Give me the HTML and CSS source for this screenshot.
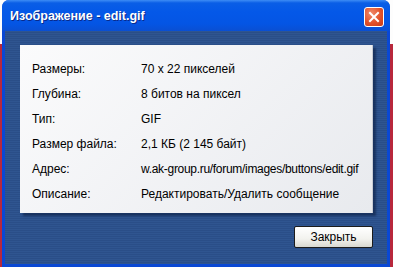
FILE: index.html
```html
<!DOCTYPE html>
<html lang="ru">
  <head>
    <meta charset="UTF-8" />
    <meta name="viewport" content="width=device-width, initial-scale=1.0" />
    <title>Изображение - edit.gif</title>
    <link rel="stylesheet" href="styles.css">
  </head>
  <body>
    <div class="window">
      <div class="titlebar">
        <span class="title">Изображение - edit.gif</span>
        <button class="close" aria-label="Закрыть">
          <svg width="12" height="12" viewBox="0 0 12 12">
            <path d="M2 2 L10 10 M10 2 L2 10" stroke="#fff" stroke-width="2" stroke-linecap="square" />
          </svg>
        </button>
      </div>
      <div class="body">
        <div class="panel">
          <div class="row"><span class="label">Размеры:</span><span class="value">70 x 22 пикселей</span></div>
          <div class="row"><span class="label">Глубина:</span><span class="value">8 битов на пиксел</span></div>
          <div class="row"><span class="label">Тип:</span><span class="value">GIF</span></div>
          <div class="row"><span class="label">Размер файла:</span><span class="value">2,1 КБ (2 145 байт)</span></div>
          <div class="row"><span class="label">Адрес:</span><span class="value value-tight">w.ak-group.ru/forum/images/buttons/edit.gif</span></div>
          <div class="row"><span class="label">Описание:</span><span class="value">Редактировать/Удалить сообщение</span></div>
        </div>
        <div class="footer">
          <button class="btn">Закрыть</button>
        </div>
      </div>
    </div>
  </body>
</html>
```

FILE: styles.css
```css
html, body {
  margin: 0;
  height: 100%;
}

body {
  padding: 0 3px 0 2px;
  background: linear-gradient(#fdfdfd 0 44px, #b8283c 44px);
  font-family: "Liberation Sans", Arial, sans-serif;
  font-size: 12px;
  color: #000;
  overflow: hidden;
}

.window {
  height: 267px;
  background: #0a48d4;
  border-radius: 7px 7px 0 0;
  padding: 0 3px 3px;
  display: flex;
  flex-direction: column;
  box-sizing: border-box;
}

.titlebar {
  height: 31px;
  margin: 0 -3px;
  padding: 0 6px 0 8px;
  border-radius: 7px 7px 0 0;
  background: linear-gradient(#3d8cf5 0, #0a5ee6 3px, #0458e8 12px, #0455e4 24px, #0a4fd2 31px);
  display: flex;
  align-items: center;
  justify-content: space-between;
}

.title {
  color: #fff;
  font-weight: bold;
  font-size: 12.5px;
  text-shadow: 1px 1px 0 #0a2a8a;
  margin-top: 1px;
}

.close {
  width: 20px;
  height: 20px;
  padding: 0;
  border: 1px solid #fff;
  border-radius: 3px;
  background: radial-gradient(circle at 35% 30%, #f08a6a, #e2512a 55%, #c83a18);
  display: flex;
  align-items: center;
  justify-content: center;
  margin-top: 2px;
}

.body {
  flex: 1;
  padding: 14px 14px 0 15px;
  background: repeating-linear-gradient(#2f5590 0 1px, #2a4e88 1px 2px);
  display: flex;
  flex-direction: column;
}

.panel {
  height: 168px;
  box-sizing: border-box;
  padding: 11px 12px 8px;
  background: linear-gradient(135deg, #fbfbfc, #e8eaee);
  box-shadow: 3px 3px 2px rgba(10, 25, 60, 0.55);
  border-right: 1px solid #c8ccd4;
}

.row {
  height: 25px;
  display: flex;
  align-items: center;
}

.label {
  width: 109px;
  flex: none;
}

.value {
  white-space: nowrap;
}

.value-tight {
  letter-spacing: -0.3px;
}

.footer {
  display: flex;
  justify-content: flex-end;
  padding-top: 13px;
}

.btn {
  width: 79px;
  height: 22px;
  border: 1px solid #1c1c1c;
  border-radius: 2px;
  background: linear-gradient(#ffffff, #f2f2ee 60%, #d8d8d0);
  font-family: "Liberation Sans", Arial, sans-serif;
  font-size: 12px;
  color: #000;
  padding: 0;
}
```
